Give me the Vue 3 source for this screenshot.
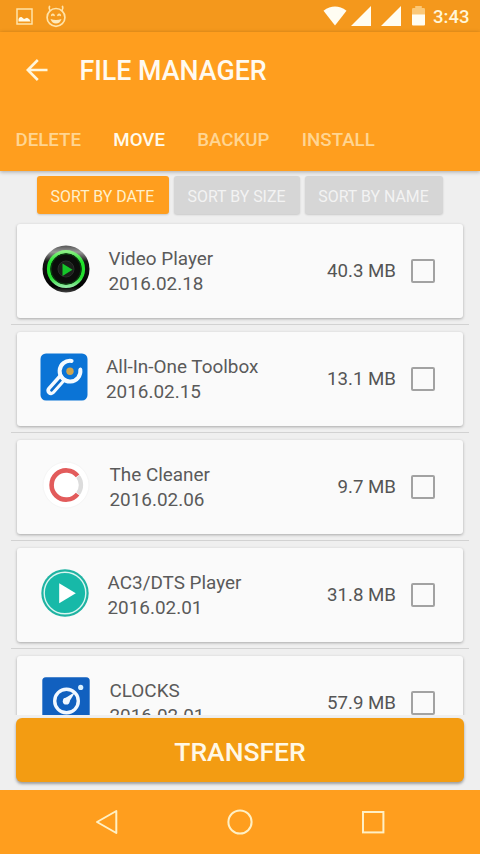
<script setup>
const tabs = [
  { label: 'DELETE' },
  { label: 'MOVE', active: true },
  { label: 'BACKUP' },
  { label: 'INSTALL' },
]
const sorts = [
  { label: 'SORT BY DATE', key: 'by-date', active: true },
  { label: 'SORT BY SIZE', key: 'by-size' },
  { label: 'SORT BY NAME', key: 'by-name' },
]
const files = [
  { icon: 'video', name: 'Video Player', date: '2016.02.18', size: '40.3 MB' },
  { icon: 'toolbox', name: 'All-In-One Toolbox', date: '2016.02.15', size: '13.1 MB' },
  { icon: 'cleaner', name: 'The Cleaner', date: '2016.02.06', size: '9.7 MB' },
  { icon: 'ac3', name: 'AC3/DTS Player', date: '2016.02.01', size: '31.8 MB' },
  { icon: 'clocks', name: 'CLOCKS', date: '2016.02.01', size: '57.9 MB' },
]
</script>

<template>
  <div class="screen">
    <div class="status">
      <div class="status-left">
        <svg class="pic" width="17" height="17" viewBox="0 0 17 17">
          <rect x="1" y="1" width="15" height="15" fill="none" stroke="#ffe3a8" stroke-width="1.5" />
          <path d="M2.5 13.5V11Q3.5 8.5 5.5 9L8 11L11 9.8Q14 11 14.5 13.5Z" fill="#fffbe8" />
        </svg>
        <svg class="face" width="22" height="24" viewBox="0 0 22 24">
          <g fill="none" stroke="#ffe3a8" stroke-width="1.7" stroke-linecap="round">
            <circle cx="11" cy="13.4" r="8.9" />
            <path d="M5 6.5Q3.5 4.5 4.5 2.5M17 6.5Q18.5 4.5 17.5 2.5" />
            <path d="M6.8 11.2Q7.8 9.6 9 11.2M13 11.2Q14.2 9.6 15.2 11.2" stroke-width="1.8" />
          </g>
          <path d="M5.5 15Q11 17 16.5 15Q15 19.5 11 19.5Q7 19.5 5.5 15Z" fill="#ffe9b8" />
        </svg>
      </div>
      <div class="status-right">
        <svg class="wifi" width="24" height="20" viewBox="0 0 24 20"><path d="M0.5 4.7Q12 -3.5 23.5 4.7L12 19.5Z" fill="#fffdf2" /></svg>
        <svg class="cell" width="20" height="20" viewBox="0 0 20 20"><path d="M0 20L20 0V20Z" fill="#fffdf2" /></svg>
        <svg class="cell second" width="20" height="20" viewBox="0 0 20 20"><path d="M0 20L20 0V20Z" fill="#fffdf2" /></svg>
        <svg class="battery" width="13" height="20" viewBox="0 0 13 20">
          <path d="M0 9V3.2Q0 2 1.2 2H3.2V0H9.8V2H11.8Q13 2 13 3.2V9Z" fill="#fbc877" />
          <path d="M0 8.5H13V18.5Q13 19.5 12 19.5H1Q0 19.5 0 18.5Z" fill="#fffdf2" />
        </svg>
        <span class="time">3:43</span>
      </div>
    </div>

    <header class="appbar">
      <div class="title-row">
        <svg class="back" width="22" height="22" viewBox="0 0 22 22">
          <path d="M11.8 1L1.8 11L11.8 21M1.8 11H21.5" fill="none" stroke="#fff6dc" stroke-width="2.6" />
        </svg>
        <h1>FILE MANAGER</h1>
      </div>
      <nav class="tabs">
        <span v-for="t in tabs" :key="t.label" :class="['tab', { active: t.active }]">{{ t.label }}</span>
      </nav>
    </header>

    <main class="content">
      <div class="sorts">
        <button v-for="s in sorts" :key="s.key" :class="['sort', s.key, { active: s.active }]">{{ s.label }}</button>
      </div>
      <div class="list">
        <div v-for="f in files" :key="f.name" class="item">
          <div :class="['card', f.icon]">
            <svg v-if="f.icon === 'video'" class="icon" viewBox="0 0 48 48">
              <defs>
                <linearGradient id="shell" x1="0" y1="0" x2="0" y2="1">
                  <stop offset="0" stop-color="#555" /><stop offset="0.14" stop-color="#999" />
                  <stop offset="0.34" stop-color="#161616" /><stop offset="0.88" stop-color="#000" /><stop offset="1" stop-color="#444" />
                </linearGradient>
                <linearGradient id="ring" x1="0" y1="0" x2="0" y2="1">
                  <stop offset="0" stop-color="#8aef83" /><stop offset="0.3" stop-color="#1fe42b" />
                  <stop offset="0.75" stop-color="#25df30" /><stop offset="1" stop-color="#8fe8a0" />
                </linearGradient>
              </defs>
              <circle cx="24" cy="24" r="23.5" fill="url(#shell)" />
              <circle cx="24" cy="24" r="17.4" fill="#061207" stroke="url(#ring)" stroke-width="3.4" />
              <circle cx="24" cy="24" r="15" fill="#0b0d0b" stroke="#0a4210" stroke-width="1" />
              <circle cx="24" cy="24" r="8" fill="#1c201c" stroke="#2c2c2c" stroke-width="1" />
              <path d="M20.5 18.5L30.5 24.8L20.5 31Z" fill="#16c52a" />
            </svg>
            <svg v-else-if="f.icon === 'toolbox'" class="icon" viewBox="0 0 48 48">
              <rect x="0.5" y="0.5" width="47" height="47" rx="5.5" fill="#0b74d6" />
              <path d="M22.5 24.5L11 37.5" fill="none" stroke="#f4faff" stroke-width="9.4" stroke-linecap="round" />
              <path d="M20.8 26.8L11.4 37.3" fill="none" stroke="#0b6ccc" stroke-width="2.6" stroke-linecap="round" />
              <circle cx="30" cy="18.3" r="8.5" fill="#0b74d6" />
              <path d="M31.6 7.9A10.4 10.4 0 1 0 40.3 16.6" fill="none" stroke="#f4faff" stroke-width="4" stroke-linecap="round" />
              <path d="M33 15.3L41.5 6.8" stroke="#0b74d6" stroke-width="8" />
              <circle cx="30" cy="18.3" r="3.7" fill="#d0a54c" />
            </svg>
            <svg v-else-if="f.icon === 'cleaner'" class="icon" viewBox="0 0 48 48">
              <circle cx="24" cy="24" r="23" fill="#fff" stroke="#f5f5f5" stroke-width="1" />
              <path d="M36 15.3A14.3 14.3 0 0 1 36 32.7" fill="none" stroke="#dcdcdc" stroke-width="4.4" />
              <path d="M35.6 14.9A14.6 14.6 0 1 0 35.6 33.1" fill="none" stroke="#e25b5b" stroke-width="4.6" />
            </svg>
            <svg v-else-if="f.icon === 'ac3'" class="icon" viewBox="0 0 48 48">
              <circle cx="24" cy="24" r="23.7" fill="#1fb3a2" />
              <circle cx="24" cy="24" r="20.8" fill="#17b9a8" stroke="#d9f5f0" stroke-width="1.4" />
              <path d="M18.2 14.2L34.8 24.2L18.2 34.2Z" fill="#fff" />
            </svg>
            <svg v-else class="icon" viewBox="0 0 48 48">
              <rect x="0.3" y="0.3" width="47.4" height="47.4" rx="3.5" fill="#1160bf" />
              <circle cx="24.5" cy="24" r="11.8" fill="none" stroke="#f2f8ff" stroke-width="3.4" />
              <path d="M22.2 21.8L33.4 14.8L26.5 26Z" fill="#f2f8ff" />
              <circle cx="24.2" cy="24.2" r="3.4" fill="#f2f8ff" />
              <circle cx="38.7" cy="10.4" r="2.6" fill="#d9f0ff" />
            </svg>
            <div class="info">
              <div>{{ f.name }}</div>
              <div>{{ f.date }}</div>
            </div>
            <span class="size">{{ f.size }}</span>
            <span class="check"></span>
          </div>
        </div>
      </div>
      <div class="action"><button class="transfer">TRANSFER</button></div>
    </main>

    <footer class="navbar">
      <svg width="24" height="26" viewBox="0 0 24 26"><path d="M21.3 2V24L2 13Z" fill="none" stroke="#fff0c4" stroke-width="2" stroke-linejoin="round" /></svg>
      <svg width="26" height="26" viewBox="0 0 26 26"><circle cx="13" cy="13" r="11.6" fill="none" stroke="#fff0c4" stroke-width="2" /></svg>
      <svg width="24" height="26" viewBox="0 0 24 26"><rect x="2" y="3" width="20.4" height="20.4" fill="none" stroke="#fff0c4" stroke-width="2" /></svg>
    </footer>
  </div>
</template>

<style>
body { margin: 0; overflow: hidden; }
</style>

<style scoped>
.screen {
  width: 480px;
  height: 854px;
  display: flex;
  flex-direction: column;
  overflow: hidden;
  background: #efefef;
  font-family: Roboto, sans-serif;
}
svg { display: block; flex: none; }
button { border: 0; padding: 0; font-family: inherit; white-space: nowrap; }
.status {
  height: 32px;
  flex: none;
  display: flex;
  justify-content: space-between;
  background: #f4981c;
}
.status-left { display: flex; align-items: flex-start; padding-left: 15.5px; }
.pic { margin-top: 7.5px; }
.face { margin: 4px 0 0 12.5px; }
.status-right { display: flex; align-items: flex-start; padding: 6px 10.5px 0 0; }
.cell { margin-left: 4.5px; }
.cell.second { margin-left: 9.5px; }
.battery { margin: 0 8.5px 0 11px; }
.time { font-size: 18.5px; font-weight: 500; line-height: 22px; color: #fff6d8; }
.appbar {
  position: relative;
  z-index: 1;
  flex: none;
  height: 139px;
  background: #ff9e1e;
  box-shadow: 0 1px 4px rgba(0, 0, 0, 0.3);
}
.title-row { display: flex; align-items: center; height: 77px; padding-left: 26px; }
.back { margin-top: -2px; }
h1 { margin: 1px 0 0 31.5px; font-size: 26.8px; font-weight: 500; line-height: 32px; color: #fffaf0; }
.tabs { display: flex; gap: 32.3px; padding: 19px 0 0 15.5px; }
.tab { font-size: 18.7px; font-weight: 500; line-height: 24px; color: #ffd592; }
.tab.active { color: #fffaec; }
.content { flex: none; height: 619px; display: flex; flex-direction: column; }
.sorts { flex: none; box-sizing: border-box; display: flex; gap: 5px; height: 51px; padding: 5px 0 0 37px; }
.sort {
  height: 38px;
  padding-top: 2px;
  border-radius: 3px;
  background: #d6d6d6;
  color: #f3f3f3;
  font-size: 15.9px;
  box-shadow: 0 1px 2px rgba(0, 0, 0, 0.16);
}
.sort.by-date { width: 132px; padding-right: 1px; }
.sort.by-size { width: 126px; padding-right: 1px; }
.sort.by-name { width: 138px; padding-right: 1px; }
.sort.active { background: #ff9e1e; color: #fff0cb; }
.list { flex: none; height: 493px; overflow: hidden; padding: 0 11px; }
.item {
  box-sizing: border-box;
  height: 108px;
  padding: 6.5px 6px 0;
  border-bottom: 1px solid #d2d2d2;
}
.item:first-child { height: 103px; padding-top: 1.5px; }
.card {
  box-sizing: border-box;
  height: 94px;
  display: flex;
  align-items: center;
  padding: 0 28px 0 25px;
  border-radius: 3px;
  background: #fafafa;
  color: #5a5a5a;
  font-size: 18.9px;
  box-shadow: 0 1px 3px rgba(0, 0, 0, 0.3);
}
.card.toolbox { padding-left: 23px; }
.card.ac3 { padding-left: 24px; }
.icon { width: 48px; height: 48px; margin-top: -4px; }
.info { flex: 1; margin-left: 18.5px; line-height: 25px; white-space: nowrap; }
.cleaner .info, .clocks .info { margin-left: 19.5px; }
.toolbox .info { margin-left: 18px; }
.size { color: #555; font-size: 18.7px; padding-top: 1px; }
.check {
  box-sizing: border-box;
  width: 24px;
  height: 24px;
  margin-left: 15px;
  border: 2px solid #a2a2a2;
  border-radius: 2px;
}
.action { flex: none; padding: 3px 16px 8px; }
.transfer {
  display: block;
  width: 448px;
  height: 64px;
  border-radius: 6px;
  background: #f39c12;
  color: #fff8e6;
  font-size: 26.5px;
  font-weight: 500;
  padding-top: 2px;
  box-shadow: 0 2px 3px rgba(0, 0, 0, 0.35);
}
.navbar {
  flex: none;
  height: 64px;
  display: flex;
  justify-content: space-between;
  align-items: center;
  padding: 0 95px;
  box-sizing: border-box;
  background: #ff9e1e;
}
</style>
